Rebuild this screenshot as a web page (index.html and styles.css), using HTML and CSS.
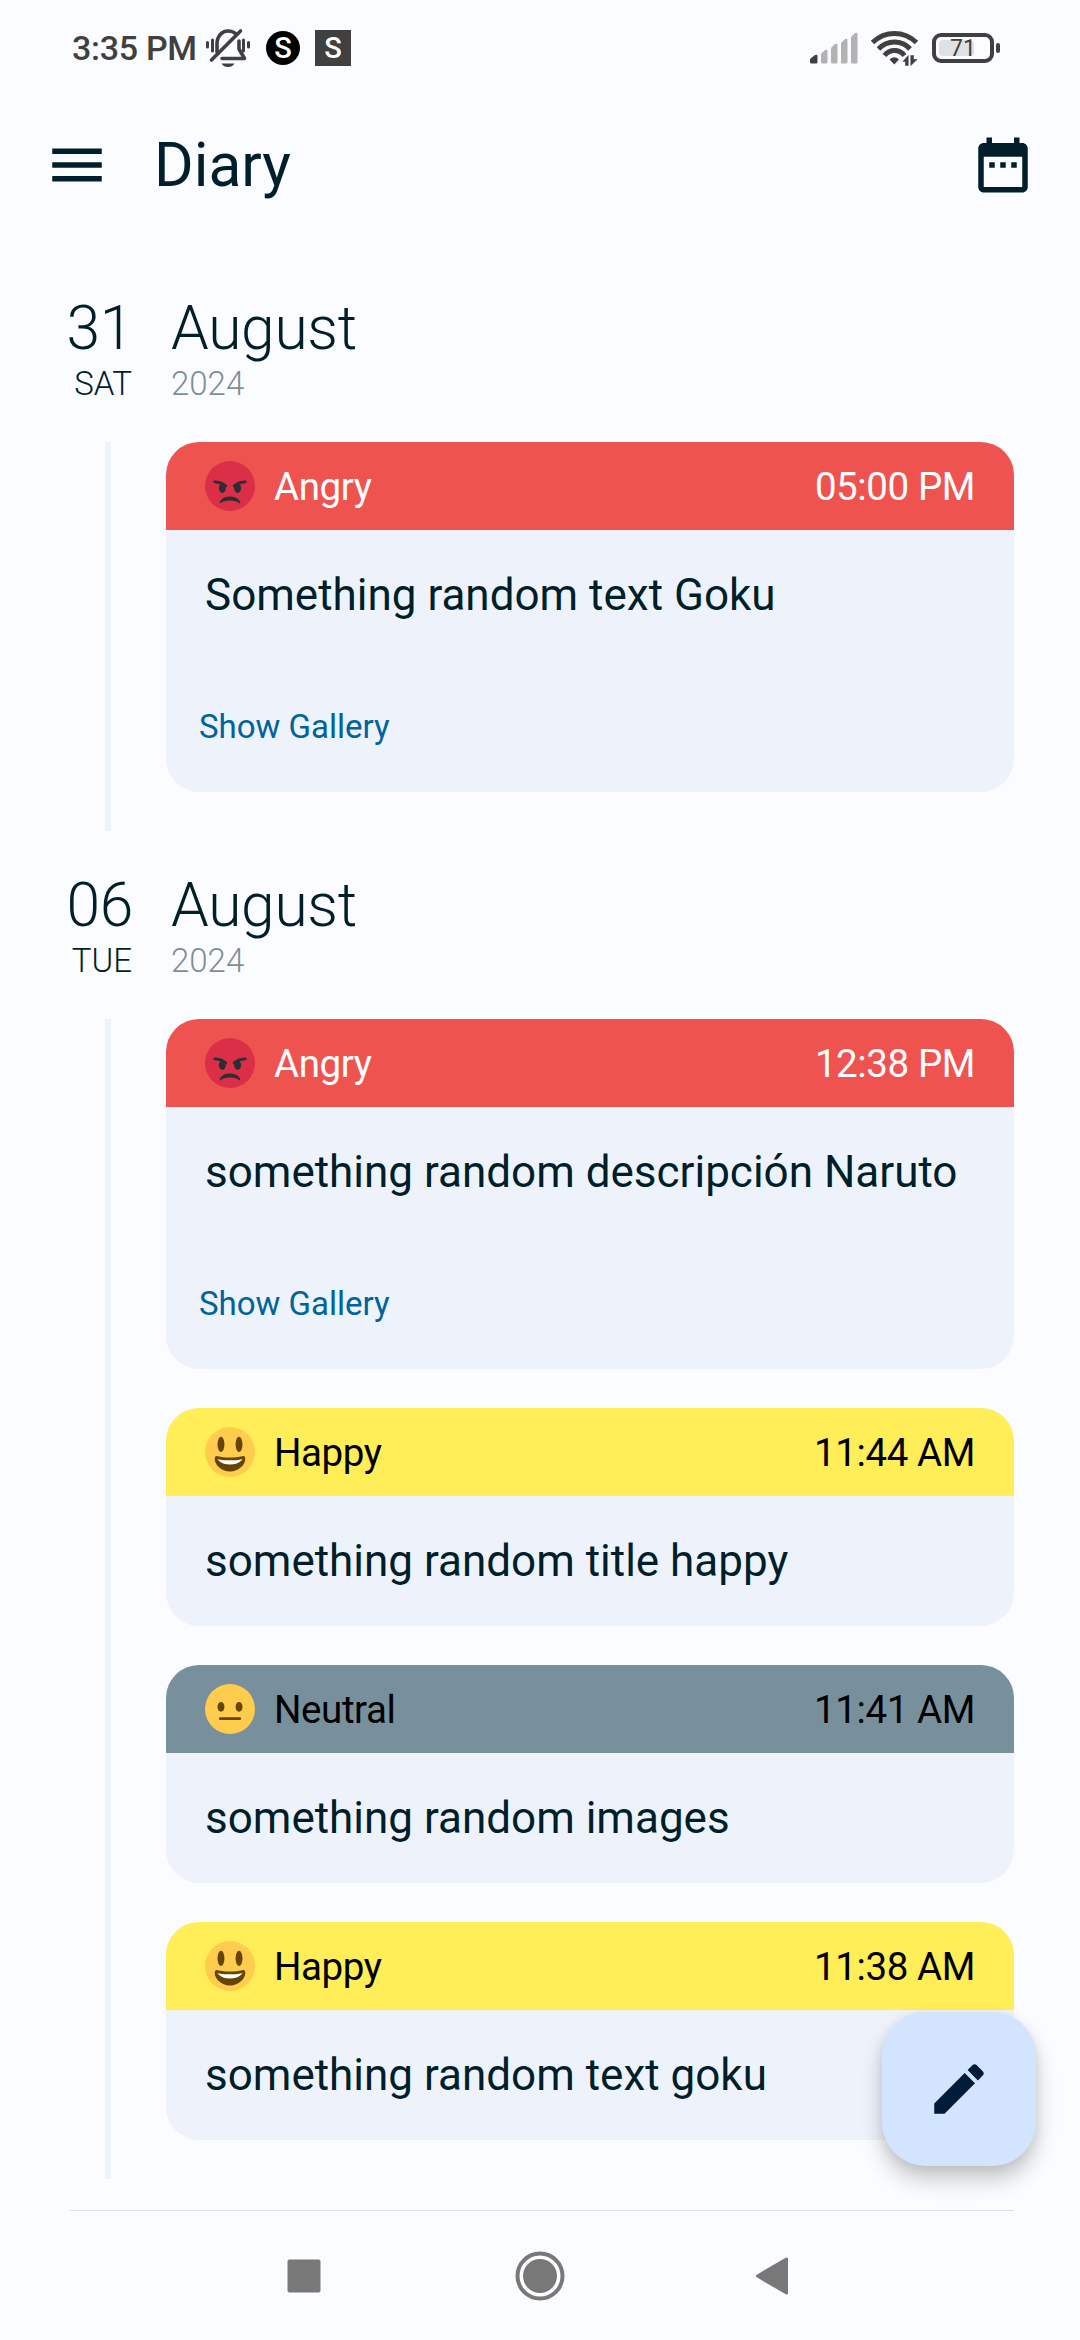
FILE: index.html
```html
<!DOCTYPE html>
<html lang="en">
<head>
<meta charset="utf-8">
<title>Diary</title>
<link rel="stylesheet" href="styles.css">
</head>
<body>
<svg class="defs" width="0" height="0" aria-hidden="true">
  <symbol id="angry" viewBox="0 0 36 36">
    <circle cx="18" cy="18" r="18" fill="#da2f47"/>
    <path fill="#292f33" d="M25.485 29.879C25.44 29.7 24.317 25.5 18 25.5c-6.318 0-7.44 4.2-7.485 4.379-.055.217.043.442.237.554.195.111.439.078.6-.077.019-.019 1.954-1.856 6.648-1.856s6.63 1.837 6.648 1.855c.096.095.224.145.352.145.084 0 .169-.021.246-.064.196-.112.294-.339.239-.557zM15.707 17.293C15.452 17.038 12.5 14 7 14c-.552 0-1 .448-1 1s.448 1 1 1c.033 0 1.924.013 3.983.745C10.37 17.399 10 18.385 10 19.5c0 1.934 1.119 3.5 2.5 3.5s2.5-1.566 2.5-3.5c0-.174-.019-.34-.037-.507.013 0 .025.007.037.007.256 0 .512-.098.707-.293.391-.391.391-1.023 0-1.414zM29 14c-5.5 0-8.452 3.038-8.707 3.293-.391.391-.391 1.023 0 1.414.195.195.451.293.707.293.013 0 .024-.007.036-.007-.016.167-.036.333-.036.507 0 1.934 1.119 3.5 2.5 3.5s2.5-1.566 2.5-3.5c0-1.115-.37-2.101-.983-2.755C27.075 16.013 28.967 16 29 16c.552 0 1-.448 1-1s-.448-1-1-1z"/>
  </symbol>
  <symbol id="happy" viewBox="0 0 36 36">
    <circle cx="18" cy="18" r="18" fill="#ffcc4d"/>
    <ellipse cx="11.5" cy="12.5" rx="2.5" ry="5.5" fill="#664500"/>
    <ellipse cx="24.5" cy="12.5" rx="2.5" ry="5.5" fill="#664500"/>
    <path fill="#664500" d="M18 22c-3.623 0-6.027-.422-9-1-.679-.131-2 0-2 2 0 4 4.595 9 11 9 6.404 0 11-5 11-9 0-2-1.321-2.132-2-2-2.973.578-5.377 1-9 1z"/>
    <path fill="#fff" d="M9 23s3 1 9 1 9-1 9-1-2 4-9 4-9-4-9-4z"/>
  </symbol>
  <symbol id="neutral" viewBox="0 0 36 36">
    <circle cx="18" cy="18" r="18" fill="#ffcc4d"/>
    <ellipse cx="11.5" cy="16.5" rx="2.5" ry="3.5" fill="#664500"/>
    <ellipse cx="24.5" cy="16.5" rx="2.5" ry="3.5" fill="#664500"/>
    <path d="M11 25h14" stroke="#664500" stroke-width="2" stroke-linecap="round"/>
  </symbol>
</svg>

<div class="status">
  <span class="clock">3:35 PM</span>
  <svg class="bell" width="46" height="40" viewBox="0 0 46 40" fill="none" stroke="#404040" stroke-width="3.6" stroke-linecap="round">
    <path d="M12 24V16C12 8 17 3 23 3c4 0 6 1 8 3"/>
    <path d="M34 13v8l5.500 9.500H17" stroke-linejoin="round"/>
    <path d="M35.500 3L6.500 32"/>
    <path d="M16.500 35.500h13q-2 3.500-6.500 3.500t-6.500-3.500z" fill="#404040" stroke="none"/>
    <path d="M2.500 14.500v4.500M7.500 12v11M38.500 12v11M43.500 14.500v4.500" stroke-width="3"/>
  </svg>
  <span class="badge round">S</span>
  <span class="badge square">S</span>
  <span class="grow"></span>
  <svg class="signal" width="48" height="32" viewBox="0 0 48 32" fill="#b2b2b3">
    <path fill="#404040" d="M0 27l5-4q2.500-1 2.500 1v6q0 1.500-1.500 1.500H1.500Q0 31.500 0 30z"/>
    <path d="M11 22l4-4q2.500-1 2.500 1v11q0 1.500-1.500 1.500h-3.500Q11 31.500 11 30zM21 16l4-4q2.500-1 2.500 1v17q0 1.500-1.500 1.500h-3.500Q21 31.500 21 30zM31 11l4-4q2.500-1 2.500 1v22q0 1.500-1.500 1.500h-3.500Q31 31.500 31 30zM41 5l4-4q2.500-1 2.500 1v28q0 1.500-1.500 1.500h-3.500Q41 31.500 41 30z"/>
  </svg>
  <svg class="wifi" width="48" height="36" viewBox="0 0 48 36" fill="none" stroke="#404040" stroke-width="5">
    <path d="M1.500 12.500Q11 3.500 23.500 3.500T45.500 12.500M7.500 19Q14 12 23.500 12T39 19M13.500 25.500Q17.500 20.500 23.500 20.500T33.500 25.500"/>
    <path d="M18.500 29.500q5-4.500 9.500 0l-4.700 5z" fill="#404040" stroke="none"/>
    <path d="M37.200 25.500v10h-2.700v-4H32zM39.800 35.500v-10h2.700v4H46z" fill="#404040" stroke="#404040" stroke-width=".6"/>
  </svg>
  <span class="battery"><span class="charge"></span><span class="percent">71</span></span>
  <span class="tip"></span>
</div>

<header class="appbar">
  <svg width="66" height="66" viewBox="0 0 24 24" fill="#001f2a"><path d="M3 18h18v-2H3zm0-5h18v-2H3zm0-7v2h18V6z"/></svg>
  <h1>Diary</h1>
  <svg width="66" height="66" viewBox="0 0 24 24" fill="#001f2a"><path d="M9 11H7v2h2zm4 0h-2v2h2zm4 0h-2v2h2zm2-7h-1V2h-2v2H8V2H6v2H5c-1.110 0-2 .9-2 2v14c0 1.100.89 2 2 2h14c1.100 0 2-.9 2-2V6c0-1.100-.9-2-2-2m0 16H5V9h14z"/></svg>
</header>

<main>
  <section class="day">
    <div class="date">
      <div class="num"><b>31</b><span>SAT</span></div>
      <div class="month"><b>August</b><span>2024</span></div>
    </div>
    <div class="entries">
      <article class="card">
        <div class="mood red"><svg width="50" height="50"><use href="#angry"/></svg><span>Angry</span><time>05:00 PM</time></div>
        <p>Something random text Goku</p>
        <a class="gallery">Show Gallery</a>
      </article>
    </div>
  </section>

  <section class="day">
    <div class="date">
      <div class="num"><b>06</b><span>TUE</span></div>
      <div class="month"><b>August</b><span>2024</span></div>
    </div>
    <div class="entries">
      <article class="card">
        <div class="mood red"><svg width="50" height="50"><use href="#angry"/></svg><span>Angry</span><time>12:38 PM</time></div>
        <p>something random descripción Naruto</p>
        <a class="gallery">Show Gallery</a>
      </article>
      <article class="card">
        <div class="mood yellow"><svg width="50" height="50"><use href="#happy"/></svg><span>Happy</span><time>11:44 AM</time></div>
        <p>something random title happy</p>
      </article>
      <article class="card">
        <div class="mood gray"><svg width="50" height="50"><use href="#neutral"/></svg><span>Neutral</span><time>11:41 AM</time></div>
        <p>something random images</p>
      </article>
      <article class="card">
        <div class="mood yellow"><svg width="50" height="50"><use href="#happy"/></svg><span>Happy</span><time>11:38 AM</time></div>
        <p>something random text goku</p>
      </article>
    </div>
  </section>
</main>

<button class="fab" aria-label="Write entry">
  <svg width="66" height="66" viewBox="0 0 24 24" fill="#001c38"><path d="M3 17.250V21h3.750L17.810 9.940l-3.750-3.750zM20.710 7.040c.39-.39.39-1.020 0-1.410l-2.340-2.340c-.39-.39-1.020-.39-1.410 0l-1.830 1.830 3.750 3.750z"/></svg>
</button>

<nav class="navbar">
  <svg width="34" height="34" viewBox="0 0 34 34"><rect x=".5" y=".5" width="33" height="33" rx="2" fill="#787878"/></svg>
  <svg class="home" width="50" height="50" viewBox="0 0 50 50"><circle cx="25" cy="25" r="22.500" fill="#fff" stroke="#787878" stroke-width="4"/><circle cx="25" cy="25" r="17" fill="#787878"/></svg>
  <svg width="34" height="40" viewBox="0 0 34 40"><path d="M2.500 20L31.500 3v34z" fill="#787878" stroke="#787878" stroke-width="3" stroke-linejoin="round"/></svg>
</nav>
</body>
</html>
```

FILE: styles.css
```css
* { box-sizing: border-box; }

body {
  margin: 0;
  width: 1080px;
  height: 2340px;
  overflow: hidden;
  display: flex;
  flex-direction: column;
  background: #fbfcff;
  color: #001f2a;
  font-family: Roboto, sans-serif;
}

svg { display: block; flex: none; }
.defs { position: absolute; }

.status {
  height: 96px;
  padding: 0 80px 0 72px;
  display: flex;
  align-items: center;
  color: #404040;
}
.clock { width: 133px; font-size: 34px; font-weight: 500; letter-spacing: -.3px; white-space: nowrap; }
.bell { margin: 0 15px 0 0; }
.badge {
  display: flex;
  align-items: center;
  justify-content: center;
  color: #fff;
  font: 500 29px/1 Roboto, sans-serif;
}
.round { width: 34px; height: 34px; margin-right: 15px; border-radius: 50%; background: #000; }
.square { width: 36px; height: 36px; background: #404040; }
.grow { flex: 1; }
.signal { margin-right: 13px; }
.wifi { margin-right: 13px; }
.battery {
  width: 62px;
  height: 30px;
  border: 4px solid #404040;
  border-radius: 9px;
  padding: 3px;
  display: grid;
}
.charge, .percent { grid-area: 1 / 1; }
.charge { width: 35px; height: 16px; border-radius: 4px; background: #e0e1e4; }
.percent { font-size: 23px; line-height: 17px; text-align: center; }
.tip { width: 4px; height: 10px; margin-left: 2px; border-radius: 2px; background: #404040; }

.appbar {
  height: 138px;
  padding: 0 44px;
  display: flex;
  align-items: center;
}
.appbar h1 { flex: 1; margin: 0 0 0 44px; font-size: 60.5px; font-weight: 400; line-height: 77px; }

main { height: 1977px; }

.day { display: flex; flex-direction: column; }
.date { height: 208px; padding-top: 57px; display: flex; gap: 38px; }
.day + .day .date { height: 188px; padding-top: 37px; }
.date b { display: block; font-size: 60.5px; font-weight: 300; line-height: 75px; letter-spacing: -.3px; }
.date span { display: block; margin-top: -1px; font-size: 33px; font-weight: 300; line-height: 38px; }
.num { width: 133px; text-align: right; }
.num span { padding-right: 1px; }
.month span { opacity: .5; }

.entries {
  margin-left: 105px;
  padding: 0 66px 39px 55px;
  border-left: 6px solid #eef3fb;
  display: flex;
  flex-direction: column;
  gap: 39px;
}
.card { border-radius: 33px; overflow: hidden; background: #eef3fb; }
.mood {
  height: 88px;
  padding: 0 39px;
  display: flex;
  align-items: center;
  gap: 19px;
  font-size: 38.5px;
  letter-spacing: -.4px;
  color: #000;
}
.mood time { margin-left: auto; }
.red { background: #ef5350; color: #fff; }
.yellow { background: #ffee58; }
.gray { background: #78909c; }
.card p { margin: 0; padding: 32px 39px 32px; font-size: 44px; line-height: 66px; white-space: nowrap; }
.gallery { display: block; padding: 29px 33px 27px; color: #00639b; font-size: 33px; line-height: 76px; }

.fab {
  position: absolute;
  left: 882px;
  top: 2012px;
  width: 154px;
  height: 154px;
  border: 0;
  padding: 0;
  border-radius: 44px;
  background: #d3e4ff;
  display: grid;
  place-items: center;
  box-shadow: 0 14px 22px rgba(0, 0, 0, .2), 0 3px 12px rgba(0, 0, 0, .08);
}

.navbar {
  margin: -1px 66px 0 69px;
  height: 130px;
  border-top: 1px solid #dfe1e5;
  padding: 0 225px 0 218px;
  display: flex;
  align-items: center;
  justify-content: space-between;
}
.home { margin-left: 4px; }
```
